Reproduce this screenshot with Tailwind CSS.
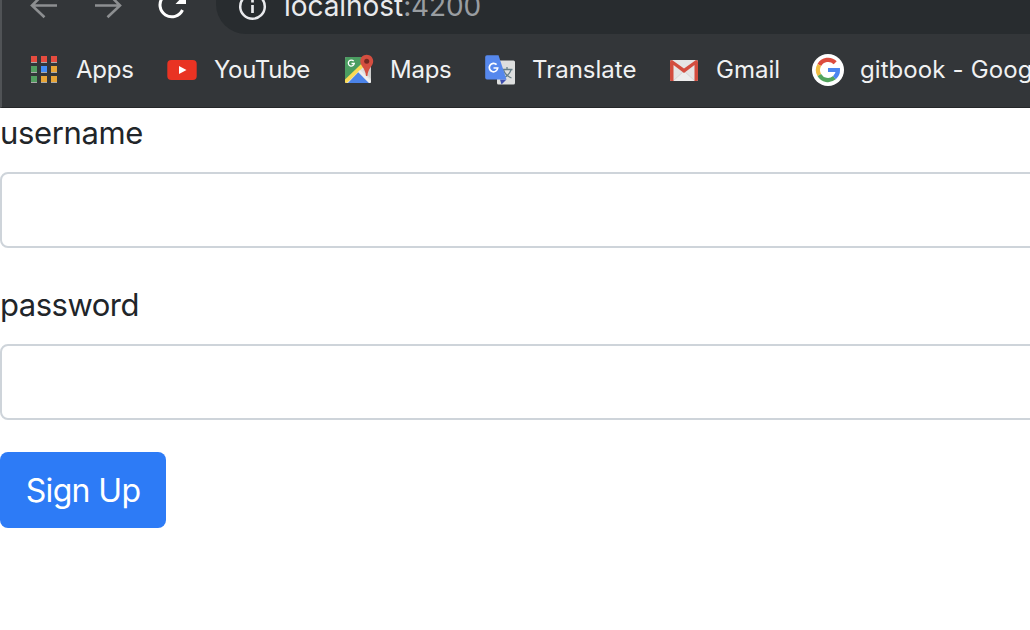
<!DOCTYPE html>
<html lang="en">
<head>
<meta charset="utf-8">
<title>Sign Up</title>
<script src="https://cdn.jsdelivr.net/npm/@tailwindcss/browser@4"></script>
</head>
<body class="w-[1030px] h-[630px] overflow-hidden bg-white font-['Inter','Liberation_Sans',sans-serif] text-[#212529]">
<header class="h-[108px] bg-[#333639] border-l-2 border-l-[#505356] border-b border-b-[#252729] overflow-hidden whitespace-nowrap">
  <div class="flex h-[34px] items-start">
    <svg class="w-[214px] h-[34px] shrink-0" viewBox="2 0 214 34" fill="none">
      <g stroke="#8d8f91" stroke-width="2.6">
        <path d="M57 5.5H32.5M44.5-7L32 5.5L44.5 17.300"/>
        <path d="M95 5.500H119.500M107.500-7L120 5.500L107.500 17.300"/>
      </g>
      <path d="M182.500 10A11.800 11.800 0 1 1 180.500-3" stroke="#fff" stroke-width="3"/>
      <path d="M175.500 4H186V-7Z" fill="#fff"/>
    </svg>
    <div class="flex flex-1 h-[34px] rounded-bl-[30px] bg-[#282c2f] overflow-hidden">
      <svg class="w-[68px] h-[34px] shrink-0" viewBox="216 0 68 34" fill="none">
        <circle cx="252.500" cy="6.500" r="12.300" stroke="#e9eaed" stroke-width="2.500"/>
        <path d="M252.500 5V13M252.500 0V2.500" stroke="#e9eaed" stroke-width="2.700"/>
      </svg>
      <p class="-mt-[12px] h-9 leading-9 text-[28px] tracking-[-0.050px] text-[#e9eaed]">localhost<span class="tracking-[-0.150px] text-[#999da1]">:4200</span></p>
    </div>
  </div>
  <nav class="flex h-[72px] items-center text-[24px] leading-8 text-[#f0f1f2]">
    <div class="flex w-[163px] shrink-0 items-center pl-[27px]">
      <svg class="w-[47px] h-[34px] shrink-0" viewBox="29 53 47 34">
        <path fill="#a9a9a9" d="M31 62h6v1h-6zM41 62h6v1h-6zM51 62h6v1h-6zM31 72h6v1h-6zM41 72h6v1h-6zM51 72h6v1h-6zM31 82h6v1h-6zM41 82h6v1h-6zM51 82h6v1h-6z"/>
        <path fill="#e64c3f" d="M31 56h6v6h-6zM41 56h6v6h-6zM51 56h6v6h-6z"/>
        <path fill="#539e61" d="M31 66h6v6h-6zM31 76h6v6h-6z"/>
        <path fill="#438df5" d="M41 66h6v6h-6z"/>
        <path fill="#e8a537" d="M51 66h6v6h-6zM41 76h6v6h-6zM51 76h6v6h-6z"/>
      </svg>
      <span class="tracking-[-0.200px]">Apps</span>
    </div>
    <div class="flex w-[178px] shrink-0 items-center">
      <svg class="w-[49px] h-[34px] shrink-0" viewBox="165 53 49 34">
        <rect x="167.300" y="60" width="29.400" height="20" rx="4" fill="#e93323"/>
        <path d="M179 66L186.500 70L179 74Z" fill="#fff"/>
      </svg>
      <span class="tracking-[-0.350px]">YouTube</span>
    </div>
    <div class="flex w-[140px] shrink-0 items-center">
      <svg class="w-[47px] h-[34px] shrink-0" viewBox="343 53 47 34">
        <clipPath id="map"><rect x="345" y="57" width="26" height="26" rx="1.500"/></clipPath>
        <g clip-path="url(#map)">
          <path fill="#e0e0e0" d="M345 57H371V83H345Z"/>
          <path fill="#4b9d61" d="M345 57H371L345 82Z"/>
          <path fill="#4b83e8" d="M347 84L359 71.500L371 84Z"/>
          <path d="M344 83L368 60" stroke="#fbda55" stroke-width="3.800"/>
          <path d="M359 71L372 84" stroke="#eee" stroke-width="3"/>
          <path fill="#cdcdcd" d="M371 62V79L363 70Z"/>
        </g>
        <path d="M353.700 61.200A3 3 0 1 0 354.300 63.500H351.500" fill="none" stroke="#fff" stroke-width="1.300"/>
        <path fill="#d44e40" d="M366.700 54.800C363 54.800 360.300 57.600 360.300 61.200C360.300 66 365.500 68 366 76H367.400C368 68 373.200 66 373.200 61.200C373.200 57.600 370.300 54.800 366.700 54.800Z"/>
        <circle cx="366.700" cy="61.300" r="2.500" fill="#742922"/>
      </svg>
      <span class="tracking-[-0.250px]">Maps</span>
    </div>
    <div class="flex w-[185px] shrink-0 items-center">
      <svg class="w-[49px] h-[34px] shrink-0" viewBox="483 53 49 34">
        <rect x="497" y="60.500" width="18" height="24" rx="1.500" fill="#dedfdf"/>
        <path d="M502 69.500H512.500M507 67V69.500M503.500 70C504.500 73 508 76.500 511.500 78M511 70C509.500 74 506 77 502.500 78" fill="none" stroke="#667f88" stroke-width="1.300"/>
        <path fill="#3f4faf" d="M500 79.500H506.500L501.500 84.500Z"/>
        <path fill="#5688ed" d="M487 55.200H498.500L506.500 79.500H487Q485.200 79.500 485.200 77.500V57Q485.200 55.200 487 55.200Z"/>
        <path d="M496.600 64.700A4.200 4.200 0 1 0 497.700 68H493.500" fill="none" stroke="#fff" stroke-width="1.700"/>
      </svg>
      <span>Translate</span>
    </div>
    <div class="flex w-[142px] shrink-0 items-center">
      <svg class="w-[48px] h-[34px] shrink-0" viewBox="668 53 48 34">
        <rect x="670" y="60" width="28" height="21" rx="1.500" fill="#e5e5e5"/>
        <path d="M673 81L684 71L695 81" fill="#ededed" stroke="#cfcfcf" stroke-width=".7"/>
        <path fill="#d34d3f" d="M670 62Q670 60 672 60L684 68.500L696 60Q698 60 698 62V79.500Q698 81 696.500 81H694.500V65L684 73L673.500 65V81H671.500Q670 81 670 79.500Z"/>
      </svg>
      <span>Gmail</span>
    </div>
    <div class="flex shrink-0 items-center">
      <svg class="w-[50px] h-[34px] shrink-0" viewBox="810 53 50 34" fill="none">
        <circle cx="828" cy="70" r="16" fill="#fff"/>
        <g stroke-width="4.200">
          <path d="M835.200 62.800A10 10 0 0 0 819.300 65" stroke="#dc4c3e"/>
          <path d="M819.300 65A10 10 0 0 0 819.300 75" stroke="#f1bd42"/>
          <path d="M819.300 75A10 10 0 0 0 834.400 77.700" stroke="#51a45c"/>
          <path d="M834.400 77.700Q838 74.500 837.900 70H828" stroke="#4c86ef"/>
        </g>
      </svg>
      <span class="tracking-[0.050px] [word-spacing:0.400px]">gitbook - Goog</span>
    </div>
  </nav>
</header>
<main class="overflow-hidden">
  <form>
    <label for="u" class="block h-16 pt-[1px] text-[31px] leading-[48px]"><span class="tracking-[-0.350px]">username</span></label>
    <input id="u" class="block h-[76px] w-[1100px] rounded-lg border-2 border-[#ced4da] bg-white px-6 outline-none">
    <label for="p" class="mt-8 block h-16 pt-[1px] text-[31px] leading-[48px]"><span class="tracking-[-0.500px]">password</span></label>
    <input id="p" type="password" class="block h-[76px] w-[1100px] rounded-lg border-2 border-[#ced4da] bg-white px-6 outline-none">
    <button type="button" class="mt-8 block h-[76px] w-[166px] rounded-lg bg-[#2d7bf6] pt-[2px] text-center text-[32px] leading-[48px] text-white whitespace-nowrap"><span class="tracking-[-0.650px]">Sign Up</span></button>
  </form>
</main>
</body>
</html>
